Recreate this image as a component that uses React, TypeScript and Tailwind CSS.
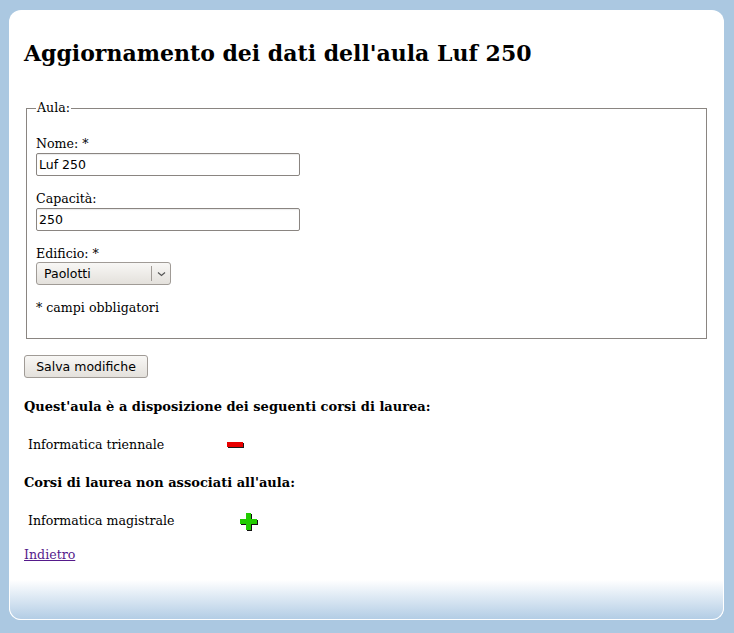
import React from "react";

function Minus() {
  return (
    <svg width="18" height="7" viewBox="0 0 18 7" className="block">
      <rect x="1" y="1" width="16" height="5" fill="#1a1a1a" />
      <rect x="0" y="0" width="16" height="5" fill="#e80000" />
    </svg>
  );
}

function Plus() {
  return (
    <svg width="18" height="18" viewBox="0 0 18 18" className="block">
      <path d="M7 1h5v6h6v5h-6v6H7v-6H1V7h6z" fill="#111" />
      <path d="M6 0h5v6h6v5h-6v6H6v-6H0V6h6z" fill="#22cc00" />
    </svg>
  );
}

export default function App() {
  const sans = { fontFamily: '"DejaVu Sans", sans-serif' };
  return (
    <div
      className="w-[734px] h-[633px] bg-[#abc8e1] pt-[10px] pl-[9px]"
      style={{ fontFamily: '"DejaVu Serif", serif' }}
    >
      <div className="w-[715px] h-[610px] bg-white rounded-[12px] flex flex-col overflow-hidden text-[12.6px] leading-[16px] text-black">
        <div className="flex-1 pl-[15px] pt-[29px]">
          <h1 className="text-[22px] leading-[28px] font-bold">
            Aggiornamento dei dati dell'aula Luf 250
          </h1>
          <fieldset className="mt-[33px] ml-[2px] w-[681px] border border-[#8a8581] pl-[9px] pb-[22px]">
            <legend className="px-[1px]">Aula:</legend>
            <div className="mt-[20px]">Nome: *</div>
            <div
              className="mt-[1px] w-[264px] h-[23px] border border-[#8a8581] rounded-[2px] pl-[2px] flex items-center text-[12.5px] shadow-[inset_0_1px_1px_rgba(0,0,0,0.08)]"
              style={sans}
            >
              Luf 250
            </div>
            <div className="mt-[15px]">Capacità:</div>
            <div
              className="mt-[1px] w-[264px] h-[23px] border border-[#8a8581] rounded-[2px] pl-[2px] flex items-center text-[12.5px] shadow-[inset_0_1px_1px_rgba(0,0,0,0.08)]"
              style={sans}
            >
              250
            </div>
            <div className="mt-[15px]">Edificio: *</div>
            <div
              className="mt-[0px] w-[135px] h-[23px] border border-[#a09b96] rounded-[3px] flex items-stretch text-[12.5px] bg-gradient-to-b from-[#f8f7f5] to-[#e4e1dc]"
              style={sans}
            >
              <div className="flex-1 flex items-center pl-[7px]">Paolotti</div>
              <div className="w-[19px] border-l border-[#a09b96] my-[3px] flex items-center justify-center">
                <svg width="9" height="6" viewBox="0 0 9 6">
                  <path d="M1 1.5l3.5 3 3.5-3" fill="none" stroke="#555" strokeWidth="1.2" />
                </svg>
              </div>
            </div>
            <div className="mt-[15px]">* campi obbligatori</div>
          </fieldset>
          <div
            className="mt-[16px] w-[124px] h-[23px] border border-[#a09b96] rounded-[3px] flex items-center justify-center text-[12.5px] bg-gradient-to-b from-[#f8f7f5] to-[#e4e1dc]"
            style={sans}
          >
            Salva modifiche
          </div>
          <div className="mt-[21px] font-bold text-[13px]">
            Quest'aula è a disposizione dei seguenti corsi di laurea:
          </div>
          <div className="mt-[22px] ml-[4px] flex items-center h-[16px]">
            <span className="w-[199px]">Informatica triennale</span>
            <span className="mt-[1px]">
              <Minus />
            </span>
          </div>
          <div className="mt-[22px] font-bold text-[13px]">
            Corsi di laurea non associati all'aula:
          </div>
          <div className="mt-[22px] ml-[4px] flex items-center h-[16px]">
            <span className="w-[212px]">Informatica magistrale</span>
            <span className="mt-[2px]">
              <Plus />
            </span>
          </div>
          <div className="mt-[18px]">
            <a href="#" className="underline text-[#551a8b]">
              Indietro
            </a>
          </div>
        </div>
        <div className="h-[40px] bg-gradient-to-b from-white to-[#b3cde5] border-x border-b border-white rounded-b-[12px]" />
      </div>
    </div>
  );
}
